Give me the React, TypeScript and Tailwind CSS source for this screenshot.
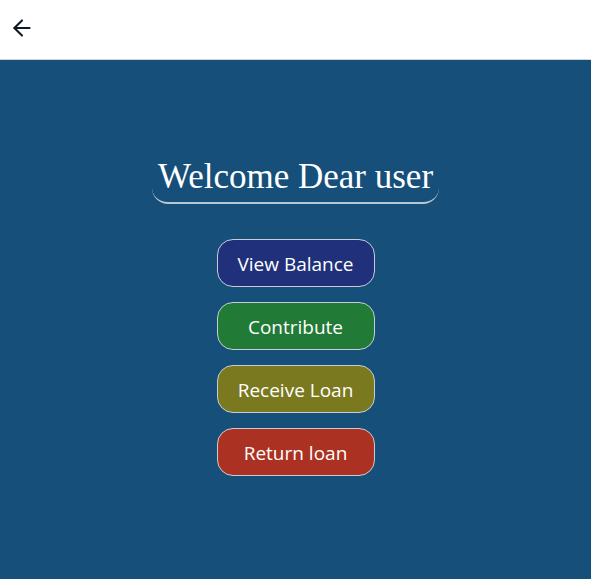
import { ArrowLeft } from "lucide-react";

const actions = [
  { label: "View Balance", color: "bg-[#20307a]" },
  { label: "Contribute", color: "bg-[#217a35]" },
  { label: "Receive Loan", color: "bg-[#7a7920]" },
  { label: "Return loan", color: "bg-[#ab3222]" },
];

export default function App() {
  return (
    <div className="flex h-[579px] flex-col bg-[#164f7a]">
      <header className="flex h-[60px] shrink-0 items-start border-b border-gray-300 bg-white pl-[9px] pt-[15px]">
        <button className="text-gray-900">
          <ArrowLeft className="h-[26px] w-[26px]" strokeWidth={1.9} />
        </button>
      </header>
      <main className="flex flex-1 flex-col items-center pt-[97px]">
        <h1 className="rounded-b-[16px] border-b-2 border-[#b9c6d3] px-[6px] pb-[5px] font-['Liberation_Serif',serif] text-[35px] leading-[40px] text-white">
          Welcome Dear user
        </h1>
        <div className="mt-[35px] flex flex-col gap-[15px]">
          {actions.map((a) => (
            <button
              key={a.label}
              className={`${a.color} h-[48px] w-[158px] rounded-[16px] border border-[#c9ccd3] pt-[3px] font-['Open_Sans',sans-serif] text-[19px] text-white`}
            >
              {a.label}
            </button>
          ))}
        </div>
      </main>
    </div>
  );
}
